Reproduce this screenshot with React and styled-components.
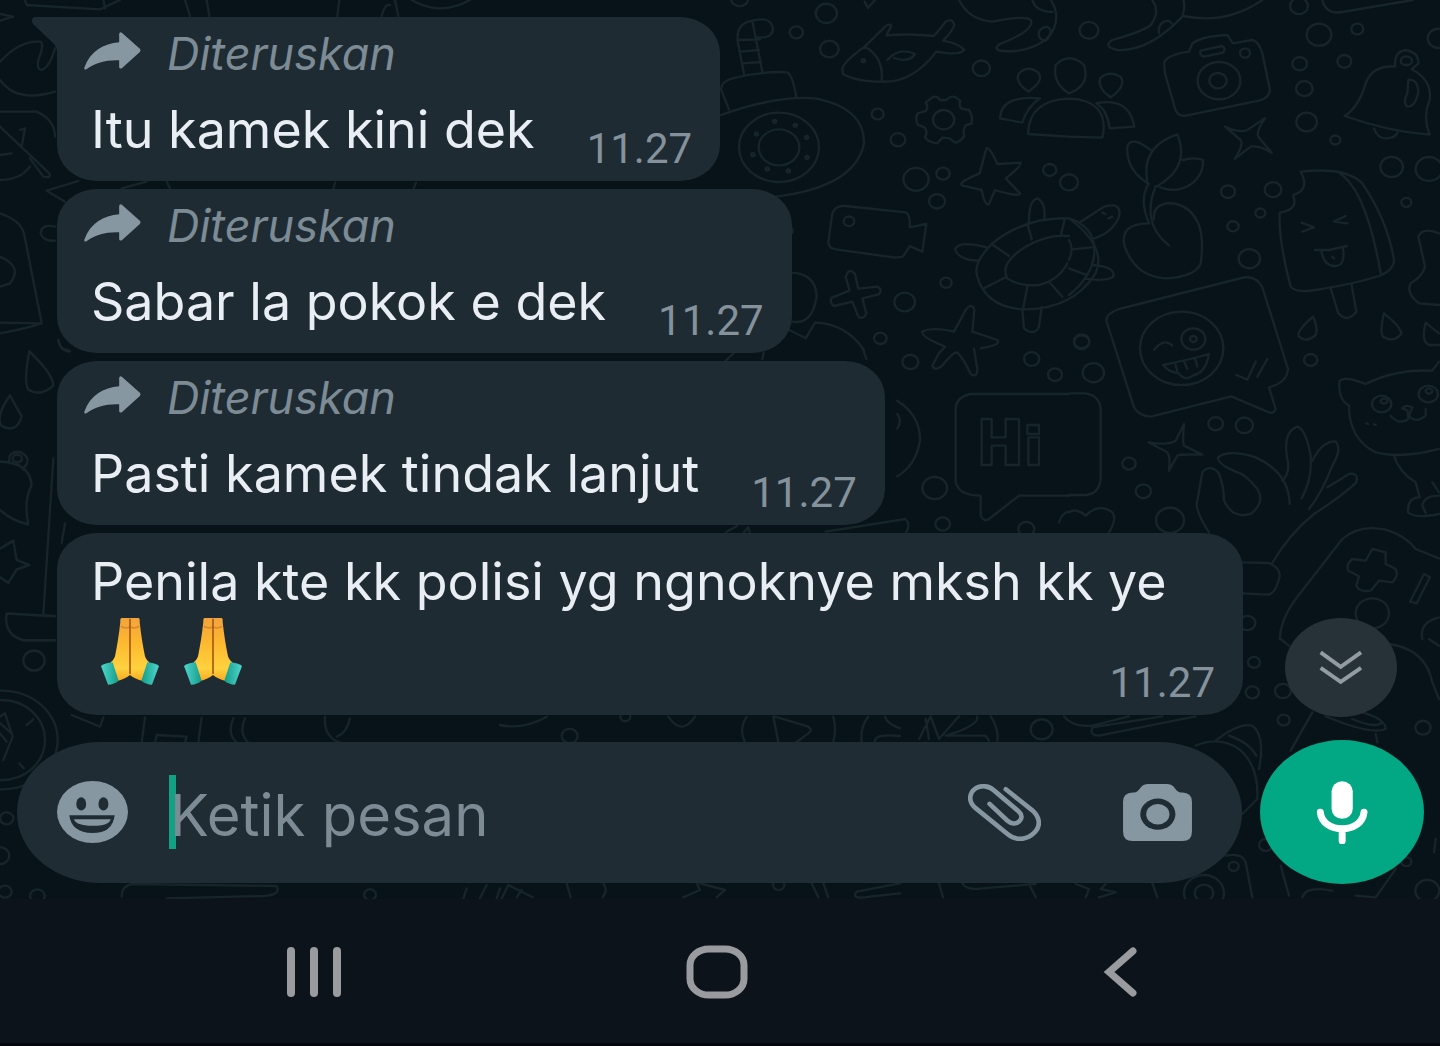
import React from "react";
import styled, { createGlobalStyle, css } from "styled-components";

const GlobalStyle = createGlobalStyle`
  *, *::before, *::after { box-sizing: border-box; }
  body { margin: 0; background: #0c131a; }
  button { border: 0; padding: 0; background: none; color: inherit; font: inherit; cursor: pointer; }
`;

const Screen = styled.div`
  display: flex;
  flex-direction: column;
  min-height: 100vh;
  overflow: hidden;
  font-family: Inter, Roboto, "Liberation Sans", sans-serif;
  color: #e9eef4;
`;

const Chat = styled.main`
  position: relative;
  isolation: isolate;
  overflow: hidden;
  flex: 1;
  display: flex;
  flex-direction: column;
  justify-content: space-between;
  gap: 24px;
  padding: 17px 16px 15px 17px;
  background: #071319;
`;

const WallpaperArt = styled.svg`
  position: absolute;
  inset: 0;
  z-index: -1;
  width: 100%;
  height: 100%;
  fill: none;
  stroke: #17242a;
  stroke-width: 7;
  stroke-linecap: round;
  stroke-linejoin: round;
`;

const MessageList = styled.ol`
  display: flex;
  flex-direction: column;
  align-items: flex-start;
  gap: 8px;
  margin: 0;
  padding: 0 40px;
  list-style: none;
`;

const Bubble = styled.li`
  position: relative;
  width: ${(p) => (p.$full ? "1186px" : "auto")};
  max-width: 100%;
  padding: ${(p) => (p.$forwarded ? "8px" : "17px")} 28px 12px 34px;
  border-radius: ${(p) => (p.$tail ? "0 40px 40px 40px / 0 36px 36px 36px" : "40px / 36px")};
  background: #1f2b33;
`;

const Tail = styled.svg`
  position: absolute;
  top: 0;
  right: 100%;
  width: 25px;
  height: 36px;
  fill: #1f2b33;
`;

const Forwarded = styled.div`
  display: flex;
  align-items: center;
  gap: 26px;
  margin: 0 0 15px -7px;
  font-size: 45px;
  line-height: 58px;
  font-style: italic;
  color: #7d8b95;
`;

const ForwardIcon = styled.svg`
  width: 57px;
  height: 38px;
  margin-bottom: 6px;
  fill: #8797a2;
`;

const Line = styled.div`
  display: flex;
  align-items: flex-end;
  justify-content: space-between;
  gap: 52px;
`;

const MessageText = styled.p`
  margin: 0 0 ${(p) => (p.$last ? "7px" : "0")};
  font-size: 52px;
  line-height: 64px;
`;

const Time = styled.time`
  font-family: Roboto, "Liberation Sans", sans-serif;
  font-size: 42px;
  line-height: 40px;
  color: #85929b;
`;

const EmojiRow = styled.span`
  display: flex;
  gap: 25px;
  padding: 3px 0 18px 10px;
`;

const EmojiArt = styled.svg`
  width: 58px;
  height: 68px;
`;

const ScrollButton = styled.button`
  position: absolute;
  right: 43px;
  bottom: 182px;
  display: grid;
  place-items: center;
  width: 112px;
  height: 99px;
  border-radius: 50%;
  background: #273138;
`;

const Composer = styled.form`
  display: flex;
  align-items: center;
  gap: 18px;
`;

const Field = styled.div`
  flex: 1;
  min-width: 0;
  display: flex;
  align-items: center;
  height: 141px;
  padding: 0 50px 0 40px;
  border-radius: 84px / 70px;
  background: #1f2c34;
`;

const Caret = styled.span`
  width: 7px;
  height: 74px;
  margin: 0 -6px 0 41px;
  background: #12a182;
`;

const MessageInput = styled.input`
  flex: 1;
  min-width: 0;
  padding: 6px 0 0;
  border: 0;
  outline: 0;
  background: none;
  color: #e9eef4;
  font-family: inherit;
  font-size: 58px;
  line-height: 72px;
  &::placeholder { color: #7d8b95; opacity: 1; }
`;

const Tools = styled.div`
  display: flex;
  align-items: center;
  gap: 82px;
`;

const IconButton = styled.button`
  display: grid;
  place-items: center;
  color: #8797a2;
`;

const MicButton = styled.button`
  display: grid;
  place-items: center;
  width: 164px;
  height: 144px;
  border-radius: 50%;
  background: #02a884;
  color: #fff;
`;

const Icon = styled.svg`
  display: block;
  width: ${(p) => p.$w}px;
  height: ${(p) => p.$h}px;
  ${(p) =>
    p.$stroke
      ? css`fill: none; stroke: ${p.$color || "currentColor"}; stroke-width: ${p.$stroke}; stroke-linecap: round; stroke-linejoin: round;`
      : css`fill: currentColor;`}
`;

const SystemNav = styled.nav`
  display: grid;
  grid-template-columns: repeat(3, 1fr);
  height: 147px;
  padding: 2px 119px 0 112px;
  border-bottom: 3px solid #06060f;
  background: #0c131a;
`;

const NavButton = styled.button`
  display: grid;
  place-items: center;
  color: #999b9f;
`;

const Dots = ({ at }) =>
  at.map(([x, y, r]) => <ellipse key={`${x},${y}`} cx={x} cy={y} rx={r} ry={r * 0.9} />);

function Wallpaper() {
  return (
    <WallpaperArt viewBox="0 0 1440 899" preserveAspectRatio="xMinYMin slice" aria-hidden="true">
      <g transform="translate(699 0) scale(0.33333)">
        <Dots at={[[382,40,32],[292,97,20],[391,147,28],[847,205,26],[536,342,18],[597,419,22],[651,538,38],[732,521,20],[714,604,24],[450,664,16],[741,848,17],[617,906,31],[544,1015,19],[122,-5,26],[1052,510,20],[1110,547,27],[265,692,16]]} />
        <path d="M135 222 117 130Q108 70 160 62 215 48 222 85 222 110 195 112L173 112M160 62 190 215M120 120 183 118M125 155 180 150M130 190 186 186" />
        <path d="M90 328 66 268Q66 245 100 235 200 212 265 217 280 225 292 290M58 348Q230 285 350 295 498 325 495 430 470 560 232 590" />
        <ellipse cx="240" cy="442" rx="120" ry="104" /><ellipse cx="240" cy="442" rx="61" ry="54" />
        <Dots at={[[227,364,5],[289,376,5],[323,412,5],[324,472,5],[268,513,5],[205,507,5],[162,464,5],[172,402,5],[493,182,5]]} />
        <path d="M430 205Q440 180 497 140L560 78Q580 68 575 82L562 106Q640 100 705 108L740 65Q760 52 766 75 760 95 732 122 780 130 796 150 780 168 712 155 640 250 548 245 470 245 432 222ZM497 140Q555 170 548 245M565 180Q600 140 648 162 630 190 585 174" />
        <path d="M497 5 507 24 528 0M780 0Q810 60 880 65 980 45 995 60 1010 90 900 133 870 160 960 152 1070 130 1072 50 1070 20 1055 0M1000 0Q1010 35 1060 36M1020 108Q1015 85 1045 80L1055 90Q1055 110 1040 122 1025 122 1020 108" />
        <ellipse cx="734" cy="359" rx="32" ry="29" />
        <path d="M700 292Q715 285 722 300L742 300Q755 285 770 292L784 302Q778 318 788 326L810 330Q822 345 818 370L800 376Q790 390 796 408 785 425 768 428L752 415 730 413 715 430Q690 428 678 412 688 395 676 382L656 374Q648 355 656 340L680 333Q690 320 680 308Z" />
        <path d="M862 445Q872 440 895 492L965 488Q970 496 920 535L963 580Q962 592 888 570L870 612Q858 620 848 570L788 556Q780 545 842 520Z" />
        <path d="M988 275Q945 245 960 220 985 195 1015 215 1040 240 988 275M903 355Q905 285 1023 295 985 320 970 368ZM1110 410 987 402Q990 300 1110 296 1225 300 1213 400L1210 413 1110 410M1110 280Q1060 250 1070 195 1110 155 1155 195 1175 255 1110 280" />
        <path d="M400 640Q410 615 440 618L620 637Q635 645 632 682L682 672 670 755 632 738 612 770 590 773 410 748Q388 745 388 725Z" />
        <path d="M447 816Q458 808 468 822L478 866 535 860Q552 868 540 883L490 895 502 940Q495 960 478 950L460 905 405 918Q390 908 398 893L452 872 440 830Z" />
        <path d="M265 818Q350 815 353 890 340 975 280 965M260 985 320 1015 348 968Q440 970 495 1050" />
        <path d="M670 995Q700 980 765 995L800 930Q818 905 826 930L820 995 895 1020Q910 1035 845 1045M670 995Q665 1010 738 1040L722 1058" />
        <path d="M1110 655Q980 650 880 730 820 790 835 830 860 920 970 928 1120 930 1190 820 1225 740 1110 655M1110 708Q1050 700 980 740 900 790 925 835 960 860 1020 855 1080 840 1105 790M878 732 930 768M855 865 920 832M985 860 972 928M1050 845 1090 890M985 670 998 718M1098 655 1085 708M990 665Q990 600 1015 595 1040 605 1036 655M862 742Q780 720 768 748 780 780 835 782M970 928 975 985Q1005 1010 1020 980L1028 922" />
      </g>

      <g transform="translate(1069 0) scale(0.33333)">
        <Dots at={[[60,91,28],[690,18,27],[750,104,37],[865,87,18],[692,191,22],[826,184,21],[706,266,25],[713,366,31],[799,420,15],[1108,115,32],[968,501,34],[1080,507,40],[1012,607,15],[477,575,21],[612,569,25],[574,639,15],[492,679,17],[541,776,32],[38,1027,23]]} />
        <path d="M250 0Q275 35 245 75 220 95 130 120 100 140 145 150 240 155 340 50 350 20 343 0M343 48Q470 75 580 0M270 100Q265 65 300 62L312 75M760 0Q770 45 820 36L1030 0" />
        <path d="M285 190Q290 165 360 155L370 130Q400 108 475 105L492 130 550 120Q570 125 580 160L603 270Q600 295 570 302L350 347Q325 350 318 325L288 220ZM395 152 460 138Q472 145 462 158L405 170Q390 165 395 152" />
        <ellipse cx="450" cy="242" rx="64" ry="56" /><ellipse cx="447" cy="242" rx="26" ry="23" /><ellipse cx="528" cy="159" rx="15" ry="14" />
        <path d="M125 292Q85 265 93 235 120 210 155 230 172 260 125 292M82 310Q180 290 196 380L122 385Q115 330 82 310" />
        <path d="M468 380Q510 400 535 390L588 355Q560 395 568 410L608 458Q570 435 545 440L497 477Q525 435 515 420Z" />
        <path d="M978 200Q975 155 1010 150 1050 158 1048 190L1028 208Q1090 240 1082 300 1060 350 1082 404 960 395 827 348 870 320 890 250 910 195 978 200M915 385Q925 415 950 415 980 415 985 398M1018 240Q1045 235 1048 275 1040 320 1015 320 1000 310 1015 280Z" />
        <ellipse cx="1012" cy="182" rx="17" ry="13" />
        <path d="M240 552Q170 510 175 440 185 405 245 450M235 545Q215 440 325 403 365 500 265 558 320 585 370 550 405 520 402 480 380 470 340 480M238 552Q210 600 240 670 150 670 167 740 200 830 290 835 380 830 395 790 405 720 390 675 360 605 290 610 250 620 255 658M260 558Q215 670 300 736" />
        <path d="M35 665 105 620Q160 605 150 650 130 700 70 717M70 795Q140 800 133 830 110 845 45 836M0 655Q80 680 76 760 70 830 0 885M10 748 68 742M0 805 50 824M0 720Q15 745 0 780M100 638 110 642M118 655 130 650" />
        <path d="M695 515Q725 570 672 585 690 630 632 638 628 720 665 860 680 880 740 870 860 850 930 828 975 810 975 780 955 660 880 550 830 500 695 515M805 515Q890 560 935 820M785 865 808 940Q835 970 862 935L848 855M698 668 735 682 700 695M830 648 795 665 835 670M738 750 780 750 833 738M757 752Q765 800 800 798 830 795 822 745M790 770 795 775" />
        <path d="M732 950Q680 995 690 1010 710 1030 740 1005 748 985 732 950M945 940Q930 1005 945 1012 975 1030 998 1000 990 975 945 940M1070 968Q1055 1025 1080 1035L1110 1035M1070 968 1110 1000M1110 700Q1060 680 1048 710L1068 800Q1060 830 1025 850 1010 880 1050 910L1110 915" />
      </g>

      <g transform="translate(1069 259) scale(0.33333)">
        <Dots at={[[38,247,23],[73,341,32],[440,494,22],[526,499,26],[180,614,20],[223,697,23],[303,784,42],[725,303,20],[910,1063,50],[535,1092,24]]} />
        <path d="M112 185Q110 165 150 150L530 54Q565 55 580 85L657 330Q655 370 600 385L620 450Q615 465 600 460L487 412 245 473Q210 470 195 445L120 210Z" />
        <ellipse cx="338" cy="268" rx="125" ry="110" /><ellipse cx="373" cy="240" rx="36" ry="32" /><ellipse cx="373" cy="240" rx="10" ry="9" />
        <path d="M255 273Q285 235 310 260M282 318Q370 300 420 285 410 340 375 348 350 370 328 342 300 340 282 318M318 312 325 335M345 306 355 330M378 298 385 322M502 348 535 362 560 308M565 353 595 300" />
        <path d="M238 550Q300 560 320 545L345 495Q340 550 345 560L400 587Q335 585 325 590L300 635Q305 590 295 580Z" />
        <path d="M0 403 50 403Q92 410 95 450V660Q90 705 50 708H0M0 760Q20 745 50 770 90 730 130 760 145 780 120 820" />
        <path d="M420 820Q375 750 385 725L400 640Q420 615 448 640 465 680 465 725 490 780 545 765 590 730 565 690 530 645 500 638 445 615 447 595 480 570 560 595 660 640 662 735M640 665Q665 640 655 600 640 520 685 503 710 510 725 590 730 660 698 718M730 605Q760 545 800 547 820 570 790 620 760 700 720 750M775 685 840 645Q870 640 862 670 820 710 735 765 660 825 610 912M520 910 600 912Q640 930 630 960 620 1000 600 1007L520 1003" />
        <path d="M890 375Q980 330 1090 335L1110 308M890 375Q830 350 812 365 805 420 840 440 840 540 920 580 1000 600 1110 570M975 590Q990 640 1040 670L1052 715Q1015 715 1017 760 1040 780 1110 765M1090 670 1110 700M1110 710Q1065 710 1060 740L1070 762M965 470Q990 500 1018 480L1016 455 1000 448Q1010 435 1030 445L1020 470Q1040 495 1070 470V450M892 493 897 495M915 496 920 498" />
        <ellipse cx="938" cy="435" rx="29" ry="25" /><ellipse cx="1078" cy="405" rx="29" ry="25" /><ellipse cx="945" cy="426" rx="10" ry="8" /><ellipse cx="1080" cy="396" rx="10" ry="8" />
        <path d="M632 1140Q635 1080 680 1020L820 840Q870 795 950 812 1010 830 1040 870L1110 898M910 870 950 880 950 915 980 930Q990 950 970 970L930 965 905 995Q870 1000 862 980L870 952 838 935Q830 915 850 900L890 905ZM1065 945 1083 955 1043 1033 1023 1028ZM1060 1140Q1050 1090 1110 1075" />
      </g>

      <g transform="translate(699 349) scale(0.33333)">
        <Dots at={[[634,39,24],[998,30,23],[1068,77,21],[707,417,37],[731,525,22],[982,540,24]]} />
        <path d="M722 8 700 50Q705 68 730 50 760 10 775 10 795 30 815 75 835 88 835 60L825 0M595 155Q665 200 663 275 650 350 595 382M595 195Q610 215 595 238M492 0 502 30M80 35 105 12M190 30 194 12M380 548 620 510Q635 525 622 550M80 550 115 530M135 550 148 535 152 550M1080 520Q1090 490 1110 488" />
        <path d="M1110 135H815Q770 145 770 180V400Q780 440 845 440V500Q855 520 870 510L960 440H1110M848 210H878V265H920V210H960V348H920V290H878V348H848ZM985 228H1020V255H985ZM988 265H1020V348H988Z" />
      </g>

      <g transform="scale(0.33333)">
        <path d="M75 0 80 15 300 28 360 0M310 0 315 25M555 0 570 48M620 0 628 48M1018 0 1012 48M1145 48Q1155 10 1170 15M1185 0 1195 48M1235 0Q1320 50 1410 0M0 42 40 50 0 62M0 185Q60 120 120 125 135 130 115 180 110 210 125 210 150 200 165 145M0 240Q50 310 165 275M0 335H110Q165 360 165 410M0 380 148 520Q155 535 130 530L90 475M60 390 75 385 65 440M0 465 35 460M0 540Q60 540 90 500M195 605 140 572 235 543M365 565 440 545M500 545 510 565M1000 568 1005 548M1240 568 1248 548" />
        <path d="M0 640Q60 660 72 700L125 970Q80 985 0 1000M125 970 0 968M0 770Q70 800 30 850L0 860M165 680Q125 670 122 700 130 725 165 722M175 1020Q180 1050 205 1050" />
      </g>

      <g transform="translate(0 160) scale(0.33333 0.3827)">
        <path d="M88 500Q70 580 85 600 120 620 160 590 160 560 88 500M30 615Q-15 670 5 695 50 715 65 670L30 615M0 788Q90 790 95 850 70 890 85 952 40 945 0 915M28 788Q25 760 60 763 90 775 80 795L68 808M0 1015 40 995 50 1045 88 1058 50 1070 25 1105 0 1090M160 780 130 1185M195 950 185 1000M165 1192 20 1185Q10 1240 70 1255H165M175 470Q180 500 210 500" />
        <ellipse cx="102" cy="1308" rx="32" ry="26" /><ellipse cx="52" cy="780" rx="14" ry="10" />
      </g>

      <g transform="translate(0 560) scale(0.33333)">
        <ellipse cx="5" cy="540" rx="168" ry="148" /><ellipse cx="5" cy="540" rx="130" ry="120" />
        <path d="M0 470 15 460 38 530 10 600M0 490 35 520M0 520 20 545M80 495 100 478M58 610 72 625M215 465 300 500 310 472M435 472 425 548M605 472 595 548M465 548 470 525 560 530 555 548M700 475Q680 520 710 548M735 475Q715 520 745 548M365 1010Q365 975 400 972L830 978Q845 1005 790 1008L500 1015" />
        <Dots at={[[20,775,20],[0,887,28],[15,995,20],[112,1008,22],[1110,1004,18]]} />
        <path d="M975 470Q970 530 1020 548M1050 475Q1040 520 1010 530M1390 1015 1400 985M1440 1015 1460 975M1490 1015 1500 985" />
      </g>

      <g transform="translate(500 700) scale(0.33333)">
        <path d="M0 75Q70 90 140 50M505 50Q545 110 585 50M740 50Q715 90 735 126M1000 50Q1010 90 1000 126M820 50 835 126M825 50 925 80Q940 90 925 100L890 126M1105 50Q1080 80 1085 126M1125 126Q1120 100 1200 108M1155 50Q1160 70 1200 85M5 595 25 555 98 592M50 592 65 570M200 550 212 592M310 550Q325 570 308 592M590 550 600 570 550 592M600 550 675 570 650 592M935 550 955 592M970 550 985 592M1200 550 1070 575Q1050 600 1110 590L1200 580" />
        <Dots at={[[209,108,24],[376,50,15],[836,555,17]]} />
      </g>

      <g transform="translate(919 639) scale(0.33333)">
        <Dots at={[[1005,70,18],[1000,160,20],[1092,156,24],[1094,243,18],[1512,266,23],[368,271,33],[944,682,15],[1525,755,36],[1462,668,15],[855,762,60],[855,762,28],[1040,618,20]]} />
        <path d="M0 300 35 232 60 300M20 240 30 300M120 232 60 300M175 232Q180 260 80 290L200 290 210 305M215 232Q240 270 235 305M435 232Q460 265 520 260L630 232M730 232 520 265Q510 290 540 290L830 232M830 320Q900 290 960 330 1020 380 1015 480L970 525M890 305Q960 250 1000 260 1040 290 1020 390M930 290Q990 310 1012 350M1115 335 1180 220M1330 220Q1400 240 1400 270 1370 285 1280 255L1220 232M1390 250Q1370 270 1300 240M1370 285 1375 310M1410 15Q1520 30 1540 130L1560 180M1085 0 1110 20M1530 0 1560 20M920 650Q970 640 980 670L1000 775M60 732 72 775M130 732Q140 755 190 748L350 735M330 735 350 775M470 735 510 750 500 775M560 735 545 750 590 760 540 775M700 732 715 775M1085 680 1110 770M1150 775Q1160 740 1240 755M1310 770 1370 775 1430 690M1550 600 1545 640" />
      </g>
    </WallpaperArt>
  );
}

function PrayingHands({ id }) {
  return (
    <EmojiArt viewBox="304 171 174 204" role="img" aria-label="🙏">
      <defs>
        <linearGradient id={`skin-${id}`} x1="0" y1="0" x2="0" y2="1">
          <stop offset="0" stopColor="#f3a33d" />
          <stop offset=".4" stopColor="#fdb92f" />
          <stop offset=".8" stopColor="#ffd23f" />
          <stop offset="1" stopColor="#f8a91f" />
        </linearGradient>
        <linearGradient id={`cuff-${id}`}>
          <stop offset="0" stopColor="#4fd6cf" />
          <stop offset="1" stopColor="#149c88" />
        </linearGradient>
      </defs>
      {[0, 1].map((side) => (
        <g key={side} transform={side ? "translate(782 0) scale(-1 1)" : undefined}>
          <path fill={`url(#skin-${id})`} d="M391 174H366Q361 174 362 186C358 225 352 258 347 284Q345 297 333 307L352 363Q376 357 391 345Z" />
          <path fill="#d98a2c" d="M364 196Q376 205 391 197V204Q376 209 363 202Z" />
          <path fill={`url(#cuff-${id})`} d="M304 318Q316 309 339 307L357 362Q344 373 325 374Z" />
        </g>
      ))}
      <path d="M391 176V342" stroke="#a75a18" strokeWidth="5" />
    </EmojiArt>
  );
}

const messages = [
  { id: 1, text: "Itu kamek kini dek", forwarded: true, tail: true },
  { id: 2, text: "Sabar la pokok e dek", forwarded: true },
  { id: 3, text: "Pasti kamek tindak lanjut", forwarded: true },
  { id: 4, text: "Penila kte kk polisi yg ngnoknye mksh kk ye", hands: 2 },
];

function Message({ text, forwarded, tail, hands }) {
  return (
    <Bubble $forwarded={forwarded} $tail={tail} $full={Boolean(hands)}>
      {tail && (
        <Tail viewBox="0 0 25 36" aria-hidden="true">
          <path d="M25 0H3Q-2 1 1 7L20 25Q25 29 25 36Z" />
        </Tail>
      )}
      {forwarded && (
        <Forwarded>
          <ForwardIcon viewBox="252 97 170 114" aria-hidden="true">
            <path d="M357 128V103Q358 96 365 99L419 147Q423 152 419 157L365 206Q358 208 357 203V182C320 180 285 190 260 208Q250 213 253 203C270 155 310 132 357 128Z" />
          </ForwardIcon>
          Diteruskan
        </Forwarded>
      )}
      {hands ? (
        <>
          <MessageText>{text}</MessageText>
          <Line>
            <EmojiRow>
              {Array.from({ length: hands }, (_, i) => <PrayingHands key={i} id={i} />)}
            </EmojiRow>
            <Time>11.27</Time>
          </Line>
        </>
      ) : (
        <Line>
          <MessageText $last>{text}</MessageText>
          <Time>11.27</Time>
        </Line>
      )}
    </Bubble>
  );
}

export default function App() {
  return (
    <>
      <GlobalStyle />
      <Screen>
        <Chat>
          <Wallpaper />
          <MessageList>
            {messages.map((m) => <Message key={m.id} {...m} />)}
          </MessageList>
          <ScrollButton type="button" aria-label="Gulir ke bawah">
            <Icon viewBox="1200 45 134 106" $w={44} $h={35} $stroke={12} $color="#929ba1">
              <path strokeLinecap="butt" strokeLinejoin="miter" d="M1205 52 1266 96 1328 52M1205 99 1266 142 1328 99" />
            </Icon>
          </ScrollButton>
          <Composer onSubmit={(e) => e.preventDefault()}>
            <Field>
              <IconButton type="button" aria-label="Emoji">
                <Icon viewBox="173 662 214 187" $w={71} $h={62}>
                  <ellipse cx="280" cy="755.5" rx="107" ry="93.5" />
                  <g fill="#1f2c34">
                    <ellipse cx="246" cy="731" rx="15" ry="20" />
                    <ellipse cx="313" cy="731" rx="15" ry="20" />
                    <path d="M210 765H347Q340 819 280 819 216 817 210 765Z" />
                  </g>
                  <path d="M224 777H335Q330 797 280 797 230 796 224 777Z" />
                </Icon>
              </IconButton>
              <Caret />
              <MessageInput type="text" placeholder="Ketik pesan" aria-label="Ketik pesan" />
              <Tools>
                <IconButton type="button" aria-label="Lampirkan">
                  <Icon viewBox="138 430 220 172" $w={73} $h={57} $stroke={14}>
                    <path d="M252 446 330 508C356 530 358 557 338 577 315 600 282 602 257 581L160 502C136 482 143 455 161 443 180 432 202 436 217 450L291 513C303 524 301 535 292 543 282 551 268 551 257 541L203 490" />
                  </Icon>
                </IconButton>
                <IconButton type="button" aria-label="Kamera">
                  <Icon viewBox="608 426 208 172" $w={69} $h={57}>
                    <path d="M637 452Q649 452 656 443L662 436Q670 426 684 426H740Q754 426 762 436L768 443Q775 452 787 452 816 453 816 480V569Q816 598 787 598H637Q608 598 608 569V480Q608 453 637 452Z" />
                    <ellipse cx="713" cy="517" rx="53" ry="47" fill="#1f2c34" />
                    <ellipse cx="713" cy="517" rx="35" ry="31" />
                  </Icon>
                </IconButton>
              </Tools>
            </Field>
            <MicButton type="button" aria-label="Rekam suara">
              <Icon viewBox="1187 421 157 190" $w={52} $h={63}>
                <rect x="1234" y="422" width="64" height="113" rx="32" ry="30" />
                <path d="M1200 515C1206 582 1326 582 1332 515M1266 567V602" fill="none" stroke="currentColor" strokeWidth="21" strokeLinecap="round" />
              </Icon>
            </MicButton>
          </Composer>
        </Chat>
        <SystemNav aria-label="Navigasi sistem">
          <NavButton type="button" aria-label="Aplikasi terbaru">
            <Icon viewBox="0 0 56 52" $w={56} $h={52} $stroke={8}>
              <path d="M5 5V47M28 5V47M51 5V47" />
            </Icon>
          </NavButton>
          <NavButton type="button" aria-label="Beranda">
            <Icon viewBox="0 0 62 54" $w={62} $h={54} $stroke={7}>
              <rect x="4" y="4" width="54" height="46" rx="19" ry="16" />
            </Icon>
          </NavButton>
          <NavButton type="button" aria-label="Kembali">
            <Icon viewBox="0 0 36 52" $w={36} $h={52} $stroke={7}>
              <path strokeLinejoin="miter" d="M31 5 7 26 31 47" />
            </Icon>
          </NavButton>
        </SystemNav>
      </Screen>
    </>
  );
}
